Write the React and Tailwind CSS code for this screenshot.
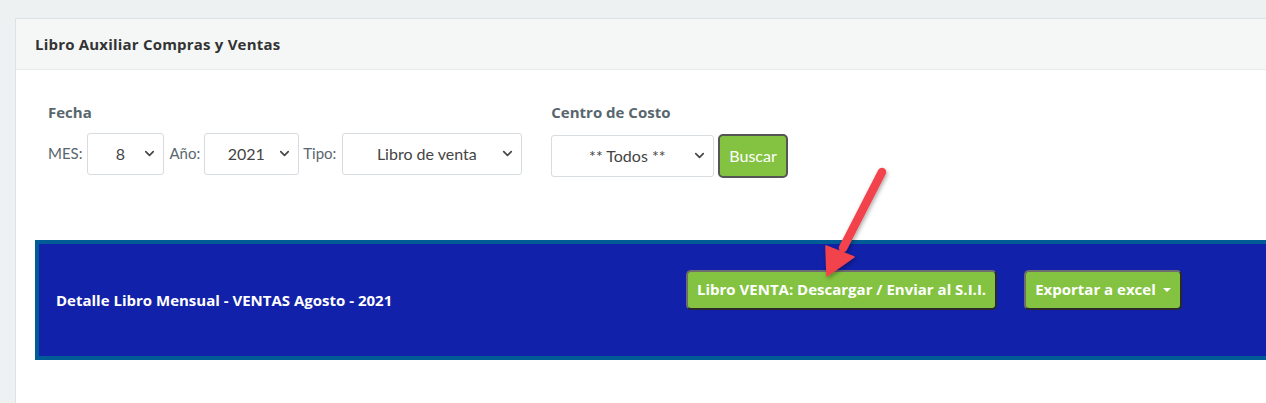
import {ChevronDown} from "lucide-react";

const font = {fontFamily: 'Lato, "Open Sans", sans-serif'};
const openSans = {fontFamily: '"Open Sans", sans-serif'};

function SelectBox({value, width}) {
    return (
        <div
            className={`h-[42px] ${width} flex items-center justify-between border border-[#d6dcdf] rounded-[3px] bg-white pl-[20px] pr-[6px] text-[16px] text-[#444]`}
        >
            <span className="flex-1 text-center pr-[10px]">{value}</span>
            <ChevronDown size={15} strokeWidth={2.6} className="text-[#444]"/>
        </div>
    );
}

function GreenButton({children, caret}) {
    return (
        <button
            className="h-[40px] px-[9px] flex items-center gap-[7px] rounded-[5px] border-2 border-t-[#6d6d6d] border-l-[#6d6d6d] border-r-[#2a2a2a] border-b-[#2a2a2a] bg-[#83c341] text-white text-[15px] font-bold"
            style={openSans}
        >
            {children}
            {caret && <span className="w-0 h-0 border-l-[4px] border-r-[4px] border-t-[4px] border-l-transparent border-r-transparent border-t-white"/>}
        </button>
    );
}

export default function App() {
    return (
        <div className="relative w-[1266px] h-[403px] overflow-hidden bg-[#eef1f2] pt-[18px] pl-[15px]" style={font}>
            <div className="w-[1300px] h-[400px] bg-white border border-[#dde3e5]">
                <div className="h-[51px] bg-[#f5f7f7] border-b border-[#e6eaeb] flex items-center pl-[19px]">
                    <h1 className="text-[15px] font-bold text-[#333] tracking-[0.2px]" style={openSans}>Libro Auxiliar Compras y Ventas</h1>
                </div>

                <div className="px-[19px]">
                    <div className="pl-[13px] pt-[31px] flex gap-[29px]">
                        <div>
                            <label className="block text-[15px] font-bold text-[#58666e] mb-[9px]" style={openSans}>Fecha</label>
                            <div className="flex items-center gap-[4px] text-[15px] text-[#58666e]">
                                <span className="mr-[1px]">MES:</span>
                                <SelectBox value="8" width="w-[77px]"/>
                                <span className="ml-[1px]">Año:</span>
                                <SelectBox value="2021" width="w-[95px]"/>
                                <span className="mr-[2px]">Tipo:</span>
                                <SelectBox value="Libro de venta" width="w-[180px]"/>
                            </div>
                        </div>
                        <div>
                            <label className="block text-[15px] font-bold text-[#58666e] mb-[10px]" style={openSans}>Centro de Costo</label>
                            <div className="flex items-center gap-[4px]">
                                <SelectBox value="** Todos **" width="w-[163px]"/>
                                <button className="h-[44px] px-[9px] rounded-[5px] border-2 border-[#555] bg-[#83c341] text-white text-[16px]">
                                    Buscar
                                </button>
                            </div>
                        </div>
                    </div>

                    <div className="mt-[62px] h-[120px] border-4 border-[#005b96] bg-[#1121a9] flex items-center pl-[17px]">
                        <div className="w-[630px] text-white text-[15px] font-bold pt-[2px]" style={openSans}>
                            Detalle Libro Mensual - VENTAS Agosto - 2021
                        </div>
                        <div className="flex items-center gap-[27px] mb-[20px]">
                            <GreenButton>Libro VENTA: Descargar / Enviar al S.I.I.</GreenButton>
                            <GreenButton caret>Exportar a excel</GreenButton>
                        </div>
                    </div>
                </div>
            </div>

            <svg className="absolute left-[790px] top-[145px] pointer-events-none" width="110" height="140" viewBox="790 145 110 140" overflow="visible">
                <defs>
                    <filter id="sh" x="-30%" y="-30%" width="160%" height="160%">
                        <feDropShadow dx="1" dy="2" stdDeviation="2" floodColor="#000" floodOpacity="0.35"/>
                    </filter>
                </defs>
                <g filter="url(#sh)" fill="#f2434b" stroke="#f2434b">
                    <line x1="882" y1="172" x2="843" y2="248" strokeWidth="8.5" strokeLinecap="round"/>
                    <polygon points="827,276 826,246 854,257" strokeWidth="1.5" strokeLinejoin="round"/>
                </g>
            </svg>
        </div>
    );
}
